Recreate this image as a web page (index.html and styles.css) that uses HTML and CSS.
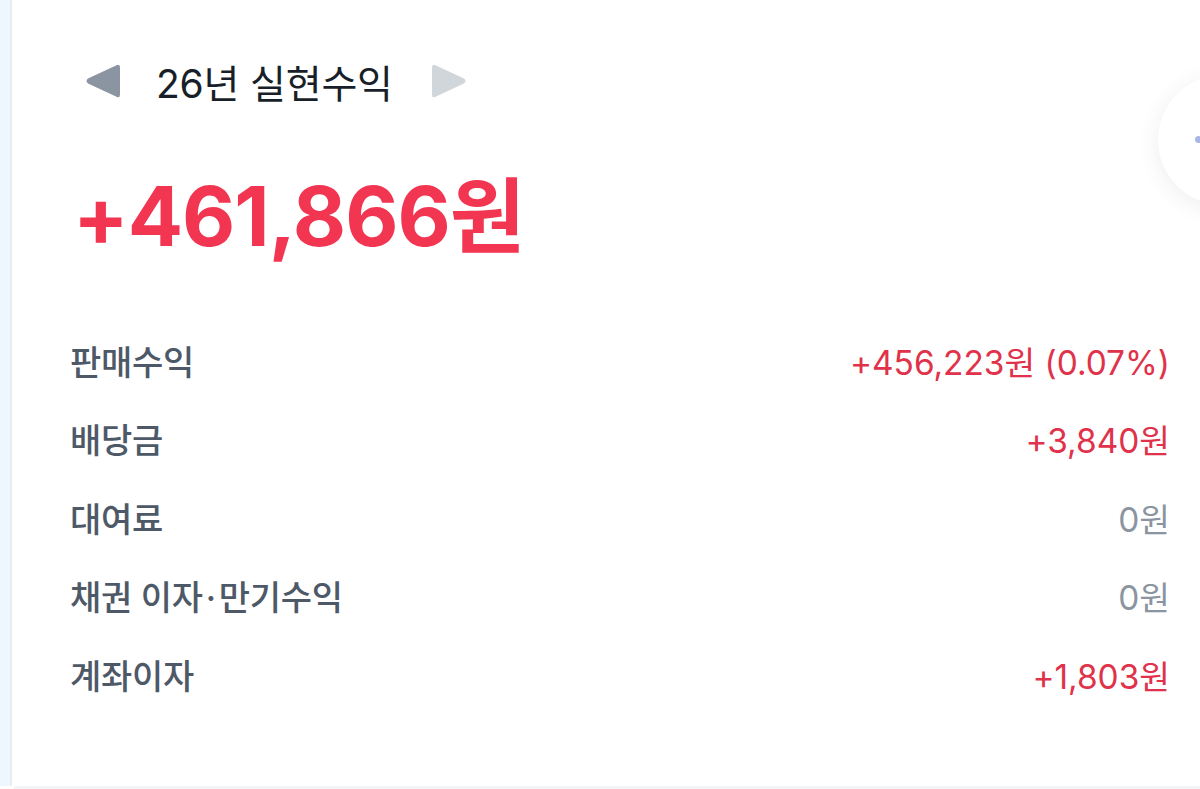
FILE: index.html
```html
<!DOCTYPE html>
<html lang="ko">
<head>
<meta charset="utf-8">
<link rel="stylesheet" href="styles.css">
</head>
<body>
<div class="page">
  <div class="side"></div>
  <main class="main">
    <header class="head">
      <button class="arrow">
        <svg width="34" height="34" viewBox="0 0 34 34"><path d="M34 3.5 Q34 -0.5 30.5 1.3 L2 14.5 Q-1 17 2 19.5 L30.5 32.7 Q34 34.5 34 30.5 Z" fill="#8b95a1"/></svg>
      </button>
      <h1 class="title">26년 실현수익</h1>
      <button class="arrow">
        <svg width="34" height="34" viewBox="0 0 34 34"><path d="M0 3.5 Q0 -0.5 3.5 1.3 L32 14.5 Q35 17 32 19.5 L3.5 32.7 Q0 34.5 0 30.5 Z" fill="#d1d6db"/></svg>
      </button>
    </header>
    <div class="total">+461,866원</div>
    <ul class="rows">
      <li class="row"><span class="label">판매수익</span><span class="val plus">+456,223원 (0.07%)</span></li>
      <li class="row"><span class="label">배당금</span><span class="val plus">+3,840원</span></li>
      <li class="row"><span class="label">대여료</span><span class="val zero">0원</span></li>
      <li class="row"><span class="label">채권 이자<span class="mid">·</span>만기수익</span><span class="val zero">0원</span></li>
      <li class="row"><span class="label">계좌이자</span><span class="val plus">+1,803원</span></li>
    </ul>
  </main>
  <div class="fab"><span class="dot"></span></div>
</div>
<div class="bottom"></div>
</body>
</html>
```
FILE: styles.css
```css
* { box-sizing: border-box; }
html, body { margin: 0; padding: 0; background: #fff; }
body {
  width: 1200px;
  height: 789px;
  overflow: hidden;
  font-family: Inter, "Noto Sans CJK KR", sans-serif;
  position: relative;
}
.page {
  display: flex;
  height: 786px;
}
.side {
  width: 12px;
  background: #eef7fd;
  border-right: 2px solid #e6edf2;
  flex: none;
}
.main {
  flex: 1;
  padding: 0 30px 0 58px;
}
.head {
  display: flex;
  align-items: center;
  height: 80px;
  margin-top: 41px;
  padding-left: 16px;
}
.arrow {
  border: 0;
  background: none;
  padding: 0;
  width: 34px;
  height: 34px;
  display: flex;
}
.title {
  margin: 0 39px 0 36px;
  font-size: 39px;
  font-weight: 400;
  color: #191f28;
  letter-spacing: -0.2px;
}
.total {
  margin-top: 46px;
  margin-left: 3px;
  font-size: 82px;
  font-weight: 700;
  color: #f23651;
  letter-spacing: -1px;
  line-height: 100px;
}
.rows {
  list-style: none;
  margin: 69px 0 0;
  padding: 0;
  display: flex;
  flex-direction: column;
  gap: 30.5px;
}
.row {
  display: flex;
  justify-content: space-between;
  align-items: center;
  height: 48px;
}
.label {
  color: #4e5968;
  font-weight: 500;
  font-size: 34px;
  letter-spacing: -0.3px;
}
.mid { margin: 0 3px; }
.val {
  font-weight: 400;
  font-size: 33.4px;
}
.plus { color: #e0324a; }
.zero { color: #8b95a1; }
.fab {
  position: absolute;
  left: 1158px;
  top: 75px;
  width: 130px;
  height: 130px;
  border-radius: 50%;
  background: #fff;
  box-shadow: 0 4px 24px rgba(0, 0, 0, 0.07);
}
.dot {
  position: absolute;
  left: 37px;
  top: 61px;
  width: 7px;
  height: 7px;
  border-radius: 50%;
  background: #a9b6e3;
}
.bottom {
  position: absolute;
  left: 14px;
  right: 0;
  bottom: 0;
  height: 3px;
  background: #f2f4f6;
}
```
